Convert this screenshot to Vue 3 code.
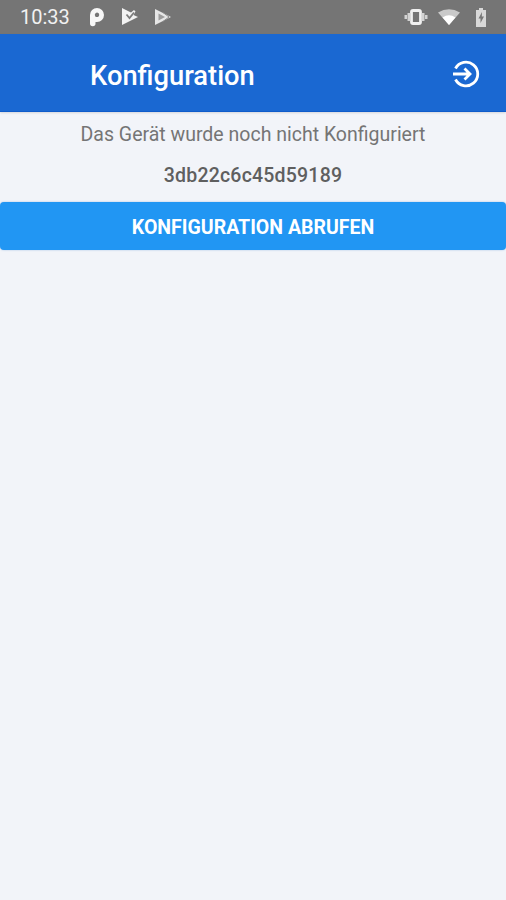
<script setup>
const title = 'Konfiguration';
const message = 'Das Gerät wurde noch nicht Konfiguriert';
const deviceId = '3db22c6c45d59189';
</script>

<template>
  <div class="screen">
    <div class="status-bar">
      <span class="clock">10:33</span>
      <div class="notif-icons">
        <svg width="18" height="20" viewBox="0 0 18 20">
          <path d="M2 16.500V8a7 7 0 1 1 7 7H7.500v1.500a2.750 2.750 0 0 1-5.500 0zM7.500 10H9a2.200 2.200 0 1 0-1.500-.6z" fill="#f7f7f7" fill-rule="evenodd" />
        </svg>
        <svg width="18" height="20" viewBox="0 0 18 20">
          <path d="M1 1l9 4.500 3-2.500 1.500 1.500-2 3.500 4.500 2L1 18z" fill="#f2f2f2" />
          <path d="M5.500 7.500l3 3.500L13 5.500" fill="none" stroke="#7d7d7d" stroke-width="1.800" />
        </svg>
        <svg width="18" height="20" viewBox="0 0 18 20">
          <path d="M1 2l16 8-16 8z" fill="#e6e6e6" />
          <path d="M4.500 6.500L11 10l-6.500 3.500z" fill="#9c9c9c" />
          <path d="M9 5.500l6 4.500-6 4.500" fill="none" stroke="#8a8a8a" stroke-width="1" />
        </svg>
      </div>
      <div class="system-icons">
        <svg width="24" height="18" viewBox="0 0 24 18">
          <rect x="7.500" y="2.500" width="9" height="13" rx="1.500" fill="none" stroke="#f0f0f0" stroke-width="2.800" />
          <path d="M3.500 5h3v8h-3zM17.500 5h3v8h-3zM0.500 7h2.500v4H.5zM21 7h2.500v4H21z" fill="#d2d2d2" />
        </svg>
        <svg width="22" height="16" viewBox="0 0 22 16">
          <path d="M0 3.500Q11-3 22 3.500L11 16z" fill="#c9c9c9" />
          <path d="M4.500 8.500Q11 4 17.500 8.500L11 16z" fill="#fff" />
        </svg>
        <svg class="battery" width="12" height="20" viewBox="0 0 12 20">
          <path d="M4 1h4v2h3v17H1V3h3z" fill="#d8d8d8" />
          <path d="M7 5L3.500 11.500h2V16L9 9.500H6.800z" fill="#777" />
        </svg>
      </div>
    </div>

    <header class="app-bar">
      <h1 class="title">{{ title }}</h1>
      <button class="login-btn" aria-label="Anmelden">
        <svg width="30" height="30" viewBox="0 0 30 30" fill="none" stroke="#fff" stroke-width="2.800">
          <path d="M4.500 9.500a11.800 11.800 0 1 1 0 11" />
          <path d="M2 15h17M13.500 9.500L19 15l-5.500 5.500" />
        </svg>
      </button>
    </header>

    <main class="content">
      <p class="message">{{ message }}</p>
      <p class="device-id">{{ deviceId }}</p>
      <button class="fetch-btn">KONFIGURATION ABRUFEN</button>
    </main>
  </div>
</template>

<style scoped>
.screen {
  display: flex;
  flex-direction: column;
  width: 506px;
  height: 900px;
  background: #f2f4f9;
  font-family: Roboto, "Liberation Sans", sans-serif;
  overflow: hidden;
}

.status-bar {
  display: flex;
  align-items: center;
  height: 34px;
  padding: 0 19px 0 20px;
  background: #757575;
  color: #f1f1f1;
  flex-shrink: 0;
}

.clock {
  font-size: 20px;
  width: 68px;
}

.notif-icons {
  display: flex;
  gap: 15px;
  align-items: center;
}

.system-icons {
  display: flex;
  gap: 10px;
  align-items: center;
  margin-left: auto;
}

.battery {
  margin-left: 5px;
}

.app-bar {
  display: flex;
  align-items: center;
  justify-content: space-between;
  height: 78px;
  padding: 5px 25px 0 90px;
  background: #1a68d2;
  border-bottom: 1px solid #0f5ccb;
  box-sizing: border-box;
  box-shadow: 0 1px 2px rgba(0, 0, 0, 0.12);
  flex-shrink: 0;
}

.title {
  margin: 1px 0 0;
  font-size: 27.300px;
  font-weight: 500;
  color: #fff;
}

.login-btn {
  display: flex;
  padding: 0;
  border: none;
  background: none;
  margin-top: -2px;
}

.content {
  display: flex;
  flex-direction: column;
  align-items: center;
}

.message {
  margin: 12px 0 0;
  font-size: 19.500px;
  line-height: 21px;
  color: #757575;
}

.device-id {
  margin: 20px 0 0;
  font-size: 19.500px;
  line-height: 21px;
  font-weight: 500;
  letter-spacing: 0.2px;
  color: #5f5f5f;
}

.fetch-btn {
  width: 100%;
  height: 48px;
  margin-top: 16px;
  padding-top: 4px;
  border: none;
  border-radius: 4px;
  background: #2196f3;
  color: #fff;
  font-family: inherit;
  font-size: 19.500px;
  font-weight: 700;
  box-shadow: 0 0 2px rgba(33, 110, 200, 0.4);
}
</style>
